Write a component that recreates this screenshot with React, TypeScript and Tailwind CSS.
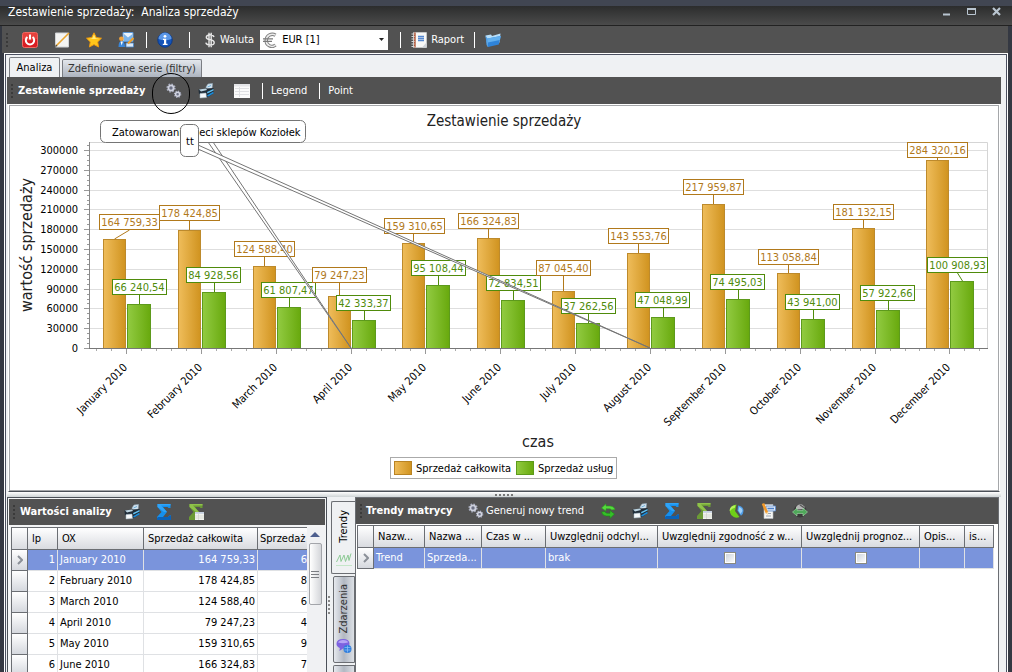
import type { ReactNode } from "react";

type Point = {
  month: string;
  total: number;
  services: number;
  totalText: string;
  servicesText: string;
  // label box corners on the chart canvas
  totalBox: [number, number];
  servicesBox: [number, number];
};

const points: Point[] = [
  { month: "January 2010", total: 164759, services: 66240, totalText: "164 759,33", servicesText: "66 240,54", totalBox: [99, 214], servicesBox: [112, 279] },
  { month: "February 2010", total: 178424, services: 84928, totalText: "178 424,85", servicesText: "84 928,56", totalBox: [159, 205], servicesBox: [186, 267] },
  { month: "March 2010", total: 124588, services: 61807, totalText: "124 588,40", servicesText: "61 807,47", totalBox: [234, 241], servicesBox: [261, 282] },
  { month: "April 2010", total: 79247, services: 42333, totalText: "79 247,23", servicesText: "42 333,37", totalBox: [312, 267], servicesBox: [336, 295] },
  { month: "May 2010", total: 159310, services: 95108, totalText: "159 310,65", servicesText: "95 108,44", totalBox: [384, 218], servicesBox: [411, 260] },
  { month: "June 2010", total: 166324, services: 72834, totalText: "166 324,83", servicesText: "72 834,51", totalBox: [458, 213], servicesBox: [486, 275] },
  { month: "July 2010", total: 87045, services: 37262, totalText: "87 045,40", servicesText: "37 262,56", totalBox: [536, 260], servicesBox: [561, 298] },
  { month: "August 2010", total: 143553, services: 47048, totalText: "143 553,76", servicesText: "47 048,99", totalBox: [608, 228], servicesBox: [635, 292] },
  { month: "September 2010", total: 217959, services: 74495, totalText: "217 959,87", servicesText: "74 495,03", totalBox: [683, 179], servicesBox: [710, 274] },
  { month: "October 2010", total: 113058, services: 43941, totalText: "113 058,84", servicesText: "43 941,00", totalBox: [758, 249], servicesBox: [785, 294] },
  { month: "November 2010", total: 181132, services: 57922, totalText: "181 132,15", servicesText: "57 922,66", totalBox: [833, 204], servicesBox: [860, 285] },
  { month: "December 2010", total: 284320, services: 100908, totalText: "284 320,16", servicesText: "100 908,93", totalBox: [907, 142], servicesBox: [927, 257] },
];

const STEP = 74.85;
const BASE = 348;
const yOf = (value: number) => Math.round(BASE - (value * 198) / 300000);

/* ---------- icons ---------- */

function Icon({ children }: { children: ReactNode }) {
  return (
    <svg width="16" height="16" viewBox="0 0 16 16" className="shrink-0" aria-hidden="true">
      {children}
    </svg>
  );
}

const PowerIcon = () => (
  <Icon>
    <rect x="0.5" y="0.5" width="15" height="15" rx="2" fill="#d81c22" stroke="#ee6a63" />
    <path d="M1 1h14v6q-7 3-14 0z" fill="#f05a50" opacity=".6" />
    <path d="M5.4 5a4.2 4.2 0 1 0 5.2 0" fill="none" stroke="#fff" strokeWidth="2" />
    <path d="M8 2.6v5" stroke="#fff" strokeWidth="2" />
  </Icon>
);

const NoteIcon = () => (
  <Icon>
    <path d="M1.5 1h13v14h-13z" fill="#f4f4f2" stroke="#cfd2d5" />
    <path d="M2 14 15 1" stroke="#e9a52f" strokeWidth="1.6" />
    <path d="m1 15 2.5-1L2 12.5z" fill="#444" />
  </Icon>
);

const StarIcon = () => (
  <Icon>
    <path d="M8 .8 10.3 5.5 15.5 6.2 11.7 9.9 12.6 15 8 12.6 3.4 15 4.300 9.900.5 6.200 5.700 5.500z" fill="#ffc61a" stroke="#f09a0c" strokeWidth=".9" />
    <path d="M8 2.500 9.600 6.300l3.800.6H3.500L6.400 6.200z" fill="#ffe97a" />
  </Icon>
);

const PlanIcon = () => (
  <Icon>
    <path d="M5 .5h10v9H5z" fill="#eaf3fc" stroke="#5b97d6" />
    <path d="M6 2 10 5.500 14.500 2v7H6z" fill="#7cb4ea" />
    <circle cx="3.400" cy="6.800" r="2.300" fill="#f2a33a" />
    <path d="M.5 15q0-6 3.200-6t3.300 6z" fill="#3a86d8" />
    <path d="m2.500 9.500 1.200 4 1.200-4z" fill="#fff" />
    <path d="M8 11h7.500v4H8z" fill="#dce9f7" stroke="#4a86c8" strokeWidth=".8" />
    <path d="m10 11.500 5.500-5.500" stroke="#f0a028" strokeWidth="2" />
  </Icon>
);

const InfoIcon = () => (
  <Icon>
    <circle cx="8" cy="8" r="7.200" fill="#1554b8" stroke="#0b3a8a" />
    <path d="M1.500 7a6.500 6.500 0 0 1 13 0q-6.500 2.500-13 0z" fill="#5a96e6" />
    <circle cx="8" cy="4.300" r="1.400" fill="#fff" />
    <path d="M6 6.700h3.200v5h1.300v1.200H5.800v-1.200H7V7.900H6z" fill="#fff" />
  </Icon>
);

const DollarIcon = () => (
  <Icon>
    <path d="M12 5q-.5-2-4-2-3.700 0-3.700 2.300 0 1.900 3.700 2.500 4.200.6 4.200 2.900Q12.200 13 8 13q-3.700 0-4.200-2.300M7 .8v14.400M9.200.8v14.400" fill="none" stroke="#e8e8e8" strokeWidth="1.400" />
  </Icon>
);

const EuroIcon = () => (
  <Icon>
    <path d="M13.500 3.200A6 6 0 0 0 4.300 8.200 5.600 5.600 0 0 0 13.500 13" fill="none" stroke="#7e7e7e" strokeWidth="3.400" />
    <path d="M13.500 3.200A6 6 0 0 0 4.300 8.200 5.600 5.600 0 0 0 13.500 13" fill="none" stroke="#ececec" strokeWidth="1.500" />
    <path d="M1 6.800h10M1 9.400h9" stroke="#7a7a7a" strokeWidth="1.200" />
  </Icon>
);

const NotebookIcon = () => (
  <Icon>
    <path d="M2.500.5h13v15h-13z" fill="#f8f8f6" stroke="#d9dadb" strokeWidth=".6" />
    <path d="M3 .5h1.700v15H3z" fill="#b2583a" />
    <path d="M.5 2h3M.5 4.500h3M.5 7h3M.5 9.500h3M.5 12h3M.5 14.500h3" stroke="#d8d8d8" />
    <path d="M7 4.500h6M7 6.500h6M7 8.500h6" stroke="#5588d0" strokeWidth="1.300" />
    <path d="m11 15.500 4.500-5v5z" fill="#cfd3d8" />
  </Icon>
);

const FolderIcon = () => (
  <Icon>
    <path d="M.5 3.500 6 2.500l1 1.500 8.500-2.500-1 9-12 4z" fill="#b7def9" />
    <path d="M2.500 6.500 15.800 4 13.800 12.500 3 15z" fill="#2f84da" />
    <path d="M2.500 6.500 15.800 4 15 8 2.800 10.500z" fill="#62b0ef" />
    <path d="M.5 3.500 2.500 6.500 3 15 1.500 13z" fill="#4d9be0" />
  </Icon>
);

const GearsIcon = () => (
  <Icon>
    <circle cx="5" cy="5" r="3.900" fill="none" stroke="#a9adc0" strokeWidth="1.400" strokeDasharray="1.600 1.460" />
    <circle cx="5" cy="5" r="2.600" fill="#6c7084" stroke="#cdd0dd" strokeWidth="1.800" />
    <circle cx="11.600" cy="11.300" r="3.100" fill="none" stroke="#a9adc0" strokeWidth="1.300" strokeDasharray="1.300 1.130" />
    <circle cx="11.600" cy="11.300" r="2" fill="#6c7084" stroke="#d3d6e2" strokeWidth="1.500" />
  </Icon>
);

const PrinterIcon = () => (
  <Icon>
    <path d="m8 4 2-3 4.500-.5L14 6l-5 1z" fill="#d5e4ef" stroke="#93adc0" strokeWidth=".6" />
    <path d="m9.500 4 3.500-1.500" stroke="#4c9fd4" strokeWidth=".8" />
    <path d="M.5 6.500 8 5.500l7.500-.5v5.500L10 14 1 11z" fill="#1f2c38" />
    <path d="M1 6.500 8 5.500l1 1.500-6 1.500z" fill="#bcd3e0" />
    <path d="M9 9 15.500 6v1.500L9.500 10.500z" fill="#64c1f0" />
    <path d="m9.500 13 6-3.500" stroke="#1c8bd8" strokeWidth="1.600" />
    <path d="m2 10.500 6-.5.500 4.500-6.500.5z" fill="#f5f8fa" stroke="#9fb4c2" strokeWidth=".5" />
  </Icon>
);

const GridIcon = () => (
  <Icon>
    <path d="M0 1h16v14H0z" fill="#fbfbfb" />
    <path d="M1 5.500h14M1 8.500h14M1 11.500h14M5.500 4v10" stroke="#dfe0e3" />
    <path d="M0 1h16v2.500H0z" fill="#e4e5e8" />
  </Icon>
);

const SigmaIcon = () => (
  <Icon>
    <path d="M1.500 0H14.500V4h-2l-1-1H7l4 5-4 5h5l1.500-1.500H15V16H1v-3l4.500-5-4-5z" fill="#1590ee" />
    <path d="M1.500 0H14.500V1.500H5L11 8H8L1.500 3z" fill="#2fa4f8" />
    <path d="M1 14 2 13h10l1.500-1.500H15V16H1z" fill="#0b62b8" />
  </Icon>
);

const SigmaTableIcon = () => (
  <Icon>
    <path d="M1.500 0H14.500V4h-2l-1-1H7l4 5-4 5h3v3H1v-3l4.500-5-4-5z" fill="#6b9a35" />
    <path d="M1.500 0H14.500V1.500H5L11 8H8L1.500 3z" fill="#8fc24a" />
    <path d="M7 8h9v8H7z" fill="#f2f3ee" />
    <path d="M7 8h9v1.800H7z" fill="#c5cfdf" />
    <path d="M7 12h9M7 14h9M10.500 10v6" stroke="#cfd3c8" strokeWidth=".7" />
  </Icon>
);

const RefreshIcon = () => (
  <Icon>
    <path d="M1.500 5 6 .8V3h4q4 0 5 3.500L11.500 7Q11 5.800 9.500 5.800H6V8z" fill="#55da3c" stroke="#2a9d20" strokeWidth=".6" />
    <path d="M14.500 11 10 15.500V13H6.500Q2.500 13 1.500 9L5 8.500q.4 1.500 2 1.700h3V7.500z" fill="#35bf28" stroke="#1d8617" strokeWidth=".6" />
  </Icon>
);

const PieIcon = () => (
  <Icon>
    <path d="M8.500 1.500a6.600 6.600 0 1 0 3 12.500L7 8z" fill="#6fcf18" />
    <path d="M7.500 2.200a5.500 5.500 0 0 0-5.800 6q3-3.500 5-3.200z" fill="#b6f05c" />
    <path d="M10 2.500q5.500.8 5.500 5.500 0 3-2.500 4.800L9.500 7.800z" fill="#4c9be6" />
    <path d="M11 4q3.200.8 3.500 4L12.500 11 10.500 7.600z" fill="#a0d0f8" />
  </Icon>
);

const ReportEditIcon = () => (
  <Icon>
    <path d="M4 1.500h9v14H4z" fill="#f6f6f4" stroke="#b9bcc1" strokeWidth=".6" />
    <path d="M6 3h9.500v5H6z" fill="#dbe7f8" stroke="#5f8dca" strokeWidth=".8" />
    <path d="M7.500 5.500h6.500" stroke="#4f80c8" strokeWidth="1.500" />
    <path d="M6 10.500h5M6 13h5" stroke="#9ba4b2" />
    <path d="m3 .5 4 9.500" stroke="#f2992a" strokeWidth="2.600" />
    <path d="m5.700 10 2.500-1-.2 3.200z" fill="#f6dfb4" />
  </Icon>
);

const SwapIcon = () => (
  <Icon>
    <circle cx="8" cy="8" r="6.500" fill="#3a3a3a" />
    <path d="M4 4Q6 .5 10 1.500l3 2.500-1 2-8 .5z" fill="#b5b5b5" />
    <path d="m8 2 4.500 3" stroke="#5a5a5a" strokeWidth="1.500" />
    <path d="M.5 9 5 5v2.300h6V5l4.500 4L11 13v-2.500H5V13z" fill="#4fa85a" stroke="#a9dcae" strokeWidth=".6" />
  </Icon>
);

const TrendIcon = () => (
  <Icon>
    <path d="M.5 11 4 4l1 6.500L8 4l1.500 6.500L12 4l1 5.500 2-7" fill="none" stroke="#8ecb96" />
    <path d="M0 14.500h16" stroke="#c5e6c9" />
  </Icon>
);

const ChatIcon = () => (
  <Icon>
    <path d="M7 1q6.500 0 6.500 4.800T7 10.500L3.500 13l.3-3Q.5 8.800.5 5.800.5 1 7 1z" fill="#7d62e0" />
    <path d="M7 2q5 0 5 2.500-5 1.500-10 0Q3.200 2 7 2z" fill="#b7a5f5" />
    <circle cx="11.500" cy="11" r="4" fill="#2f7ddd" />
    <path d="M8.500 9.500h6M8.500 12h6M11.500 7.500v7" stroke="#8fc2f6" strokeWidth=".7" />
  </Icon>
);

/* ---------- small parts ---------- */

function Grip() {
  return (
    <span className="flex flex-col gap-0.5" aria-hidden="true">
      <i className="size-0.5 bg-[#3a3a3a]" />
      <i className="size-0.5 bg-[#3a3a3a]" />
      <i className="size-0.5 bg-[#3a3a3a]" />
      <i className="size-0.5 bg-[#3a3a3a]" />
    </span>
  );
}

const Separator = () => <span className="h-4 w-px bg-white" aria-hidden="true" />;

function ToolButton({ label, children }: { label: string; children: ReactNode }) {
  return (
    <button type="button" aria-label={label} className="flex size-4 items-center justify-center">
      {children}
    </button>
  );
}

/* ---------- chart ---------- */

function ValueLabel({ box, text, color, anchor }: { box: [number, number]; text: string; color: string; anchor: [number, number] }) {
  const width = text.length > 9 ? 60 : 54;
  const middle = box[0] + width / 2 + 0.5;
  // the leader stays upright unless the label was pushed aside
  const from = Math.abs(middle - anchor[0]) < 3 ? anchor[0] : middle;
  return (
    <g>
      <path d={`M${from} ${box[1] + 16}L${anchor[0]} ${anchor[1]}`} stroke={color} />
      <rect x={box[0] + 0.5} y={box[1] + 0.5} width={width} height="15" fill="#fff" stroke={color} />
      <text x={middle} y={box[1] + 12} textAnchor="middle" fill={color}>
        {text}
      </text>
    </g>
  );
}

function SalesChart() {
  const levels = Array.from({ length: 11 }, (_, i) => i * 30000);
  const minor = Array.from({ length: 42 }, (_, i) => i * 7500).filter((v) => v <= 310000);

  return (
    <svg viewBox="10 106 988 384" className="block h-auto w-full text-[11px]" role="img" aria-label="Zestawienie sprzedaży">
      <defs>
        <linearGradient id="orange">
          <stop offset="0" stopColor="#efbd5b" />
          <stop offset="1" stopColor="#d0931f" />
        </linearGradient>
        <linearGradient id="green">
          <stop offset="0" stopColor="#92cb42" />
          <stop offset="1" stopColor="#68a90d" />
        </linearGradient>
      </defs>

      <text x="504" y="126" textAnchor="middle" className="text-[15px]" fill="#222">
        Zestawienie sprzedaży
      </text>

      <path d="M89 142.500h898.500V348" fill="none" stroke="#d5d5d5" />
      {levels.slice(1).map((v) => (
        <path key={v} d={`M90 ${yOf(v) + 0.5}h897`} stroke="#dedede" />
      ))}
      {levels.map((v) => (
        <g key={v}>
          <path d={`M84 ${yOf(v) + 0.5}h5`} stroke="#999" />
          <text x="78" y={yOf(v) + 4} textAnchor="end">
            {v}
          </text>
        </g>
      ))}
      {minor.map((v) => (
        <path key={v} d={`M87 ${yOf(v) + 0.5}h2`} stroke="#999" />
      ))}
      <path d="M89.500 142v207" stroke="#888" />

      {points.map((p, i) => {
        const x = Math.round(103 + i * STEP);
        const top = yOf(p.total);
        const low = yOf(p.services);
        return (
          <g key={p.month}>
            <rect x={x + 0.5} y={top + 0.5} width="22" height={BASE - top} fill="url(#orange)" stroke="#bd8a2c" />
            <rect x={x + 24.5} y={low + 0.5} width="23" height={BASE - low} fill="url(#green)" stroke="#5d9a1c" />
          </g>
        );
      })}

      <path d="M89 348.500h899" stroke="#777" />
      {points.map((p, i) => {
        const x = Math.round(126 + i * STEP);
        return (
          <g key={p.month}>
            <path d={`M${x + 0.5} 349v5`} stroke="#999" />
            <path d={`M${x - 29.5} 349v2M${x - 14.5} 349v2M${x + 15.5} 349v2M${x + 30.5} 349v2`} stroke="#aaa" />
            <text transform={`translate(${x + 2} 368) rotate(-45)`} textAnchor="end">
              {p.month}
            </text>
          </g>
        );
      })}

      {points.map((p, i) => {
        const x = Math.round(103 + i * STEP);
        return (
          <g key={p.month}>
            <ValueLabel box={p.totalBox} text={p.totalText} color="#b1791b" anchor={[x + 11.5, yOf(p.total)]} />
            <ValueLabel box={p.servicesBox} text={p.servicesText} color="#4f8b0b" anchor={[x + 36.5, yOf(p.services)]} />
          </g>
        );
      })}

      <g fill="#fff" stroke="#757575">
        <path d="M208 142 351 348 213 142" />
        <rect x="100.500" y="120.500" width="205" height="22" rx="5" />
        <path d="M198 145 650 348 198 149" />
      </g>
      <text x="112" y="136">
        Zatowarowanie sieci sklepów Koziołek
      </text>
      <rect x="180.500" y="124.500" width="18" height="32" rx="5" fill="#fff" stroke="#757575" />
      <text x="190" y="145" textAnchor="middle">
        tt
      </text>

      <text transform="translate(32 245) rotate(-90)" textAnchor="middle" className="text-base" fill="#222">
        wartość sprzedaży
      </text>
      <text x="538" y="447" textAnchor="middle" className="text-base" fill="#222">
        czas
      </text>

      <rect x="390.500" y="457.500" width="226" height="21" fill="#fff" stroke="#aaa" />
      <rect x="394.500" y="461.500" width="17" height="13" fill="url(#orange)" stroke="#b98323" />
      <text x="416" y="472">
        Sprzedaż całkowita
      </text>
      <rect x="516.500" y="461.500" width="17" height="13" fill="url(#green)" stroke="#5d9a1c" />
      <text x="538" y="472">
        Sprzedaż usług
      </text>
    </svg>
  );
}

/* ---------- bottom panels ---------- */

const headCell =
  "h-[22px] overflow-hidden border-r border-b border-[#6b6e73] bg-linear-to-b from-white to-[#d9dbe0] px-1 text-left font-normal whitespace-nowrap";
const markCell = "border-r border-b border-[#6b6e73] bg-linear-to-b from-white to-[#d5d8de] p-0 text-center text-[#8b8f96]";

function Marker() {
  return (
    <svg width="6" height="10" viewBox="0 0 6 10" className="mx-auto" aria-hidden="true">
      <path d="m1 1 4 4-4 4" fill="none" stroke="#8b9098" strokeWidth="2" />
    </svg>
  );
}

function ValuesPanel() {
  const clipped = ["6", "8", "6", "4", "9", "7"];
  return (
    <section className="flex w-[320px] shrink-0 flex-col border border-b-0 border-[#4b5058] bg-[#f3f4f5] px-px pt-px">
      <div className="flex h-[26px] shrink-0 items-center gap-1 bg-[#525252] pl-1 text-white">
        <Grip />
        <h2 className="w-[101px] pl-px font-bold whitespace-nowrap">Wartości analizy</h2>
        <div className="flex gap-4">
          <ToolButton label="Drukuj wartości"><PrinterIcon /></ToolButton>
          <ToolButton label="Suma"><SigmaIcon /></ToolButton>
          <ToolButton label="Suma tabeli"><SigmaTableIcon /></ToolButton>
        </div>
      </div>
      <div className="mt-0.5 ml-0.5 flex min-h-0 flex-1 overflow-hidden border-l border-[#6b6e73] bg-white">
        <div className="min-w-0 flex-1 overflow-hidden border-t border-[#6b6e73]">
          <table className="w-full table-fixed border-separate border-spacing-0">
            <colgroup>
              <col className="w-4" />
              <col className="w-[30px]" />
              <col className="w-[86px]" />
              <col className="w-[114px]" />
              <col />
            </colgroup>
            <thead>
              <tr>
                <th className={headCell} />
                <th className={headCell}>lp</th>
                <th className={headCell}>OX</th>
                <th className={headCell}>Sprzedaż całkowita</th>
                <th className="h-[22px] border-b border-[#6b6e73] bg-linear-to-b from-white to-[#d9dbe0] pl-0.5 text-left font-normal whitespace-nowrap">
                  Sprzedaż
                </th>
              </tr>
            </thead>
            <tbody>
              {clipped.map((digit, i) => (
                <tr key={i} className={i === 0 ? "h-[21px] bg-[#7a94dc] text-white" : "h-[21px] bg-white"}>
                  <td className={markCell}>{i === 0 && <Marker />}</td>
                  <td className="border-r border-b border-[#dfe1e4] px-0.5 text-right">{i + 1}</td>
                  <td className="border-r border-b border-[#dfe1e4] px-0.5 whitespace-nowrap">{points[i].month}</td>
                  <td className="border-r border-b border-[#dfe1e4] px-0.5 text-right">{points[i].totalText}</td>
                  <td className="border-b border-[#dfe1e4] text-right">{digit}</td>
                </tr>
              ))}
            </tbody>
          </table>
        </div>
        <div className="flex w-[18px] flex-col items-center bg-[#f0f1f3] pr-0.5" aria-hidden="true">
          <svg width="10" height="6" viewBox="0 0 10 6" className="my-1">
            <path d="M0 6 5 1l5 5z" fill="#4d5f8e" />
          </svg>
          <div className="mt-0.5 flex h-[62px] w-[13px] flex-col items-center justify-center gap-0.5 rounded-xs border border-[#a3a5aa] bg-linear-to-r from-white to-[#d4d6da]">
            <i className="h-px w-2 bg-[#7a7d82]" />
            <i className="h-px w-2 bg-[#7a7d82]" />
            <i className="h-px w-2 bg-[#7a7d82]" />
          </div>
        </div>
      </div>
    </section>
  );
}

function SideTabs() {
  return (
    <div className="mt-1 flex w-6 shrink-0 flex-col gap-0.5">
      <button type="button" className="flex h-[73px] w-6 flex-col items-center justify-end gap-2 rounded-l-xs border border-r-0 border-[#6b6e73] bg-[#eff1f3] pb-1.5">
        <span className="rotate-180 [writing-mode:vertical-rl]">Trendy</span>
        <TrendIcon />
      </button>
      <button type="button" className="ml-0.5 flex h-[87px] flex-col items-center justify-end gap-1 rounded-l-xs border border-[#6b6e73] bg-linear-to-r from-[#e6e9ee] via-[#b2b8c2] to-[#dde1e6] pb-2">
        <span className="rotate-180 text-[#333] [writing-mode:vertical-rl]">Zdarzenia</span>
        <ChatIcon />
      </button>
      <div className="ml-0.5 flex-1 rounded-tl-xs border border-b-0 border-[#6b6e73] bg-linear-to-r from-[#e6e9ee] via-[#b2b8c2] to-[#dde1e6]" />
    </div>
  );
}

function TrendsPanel() {
  const heads = ["Nazw...", "Nazwa ...", "Czas w ...", "Uwzględnij odchyl...", "Uwzględnij zgodność z w...", "Uwzględnij prognoz...", "Opis...", "is..."];
  const cell = "border-r border-b border-[#dfe1e4] px-0.5 whitespace-nowrap";
  return (
    <section className="mr-0.5 flex min-w-0 flex-1 flex-col border-x border-t border-[#6b6e73] bg-white">
      <div className="flex h-[26px] shrink-0 items-center gap-1 bg-[#525252] pl-1 text-white">
        <Grip />
        <h2 className="w-[98px] font-bold whitespace-nowrap">Trendy matrycy</h2>
        <button type="button" className="flex w-[128px] items-center gap-0.5 whitespace-nowrap">
          <GearsIcon />
          Generuj nowy trend
        </button>
        <div className="flex gap-4">
          <ToolButton label="Odśwież"><RefreshIcon /></ToolButton>
          <ToolButton label="Drukuj trendy"><PrinterIcon /></ToolButton>
          <ToolButton label="Suma trendów"><SigmaIcon /></ToolButton>
          <ToolButton label="Suma tabeli trendów"><SigmaTableIcon /></ToolButton>
          <ToolButton label="Wykres"><PieIcon /></ToolButton>
          <ToolButton label="Edytuj raport"><ReportEditIcon /></ToolButton>
          <ToolButton label="Zamień"><SwapIcon /></ToolButton>
        </div>
      </div>
      <div className="mt-px mr-1 ml-px border-t border-l border-[#6b6e73]">
        <table className="w-full table-fixed border-separate border-spacing-0">
          <colgroup>
            <col className="w-4" />
            <col className="w-[51px]" />
            <col className="w-[57px]" />
            <col className="w-16" />
            <col className="w-28" />
            <col className="w-36" />
            <col className="w-[118px]" />
            <col className="w-[45px]" />
            <col />
          </colgroup>
          <thead>
            <tr>
              <th className={headCell} />
              {heads.map((head) => (
                <th key={head} className={headCell}>{head}</th>
              ))}
            </tr>
          </thead>
          <tbody>
            <tr className="h-[21px] bg-[#7a94dc] text-white">
              <td className={markCell}><Marker /></td>
              <td className={cell}>Trend</td>
              <td className={cell}>Sprzeda...</td>
              <td className={cell} />
              <td className={cell}>brak</td>
              <td className={cell}><GridCheck label="Uwzględnij zgodność" /></td>
              <td className={cell}><GridCheck label="Uwzględnij prognozę" /></td>
              <td className={cell} />
              <td className={cell} />
            </tr>
          </tbody>
        </table>
      </div>
    </section>
  );
}

function GridCheck({ label }: { label: string }) {
  return (
    <input
      type="checkbox"
      aria-label={label}
      className="mx-auto block size-3 appearance-none border border-[#8a8a80] bg-linear-to-br from-[#c9d0d8] to-white outline outline-offset-[-2px] outline-white"
    />
  );
}

/* ---------- window ---------- */

export default function App() {
  return (
    <div className="flex h-screen flex-col overflow-hidden bg-[#343842] font-['DejaVu_Sans_Condensed','Noto_Sans',sans-serif] text-[11px] leading-[14px] text-black">
      <header className="flex h-[26px] shrink-0 items-center justify-between border-t-6 border-b border-t-[#414652] border-b-[#222] bg-linear-to-b from-[#2c2d2d] to-[#4b4b4b] pr-2.5 pl-2 text-[12px] text-white">
        <h1 className="pb-2 whitespace-pre">Zestawienie sprzedaży:  Analiza sprzedaży</h1>
        <div className="flex gap-[15px] pb-2 text-[#b9c5d0]">
          <button type="button" aria-label="Minimalizuj">
            <svg width="10" height="10" viewBox="0 0 10 10"><path d="M1 7.500h7" stroke="currentColor" strokeWidth="2" /></svg>
          </button>
          <button type="button" aria-label="Maksymalizuj">
            <svg width="10" height="10" viewBox="0 0 10 10"><path d="M.5 2.500h8v5h-8z" fill="none" stroke="currentColor" /><path d="M0 2h9" stroke="currentColor" strokeWidth="2" /></svg>
          </button>
          <button type="button" aria-label="Zamknij">
            <svg width="10" height="10" viewBox="0 0 10 10"><path d="m1 1 7 7M8 1 1 8" stroke="currentColor" strokeWidth="2.200" /></svg>
          </button>
        </div>
      </header>

      <div className="mr-1 ml-0.5 flex h-[27px] shrink-0 items-center bg-[#525252] pl-1 text-white">
        <Grip />
        <div className="flex items-center gap-4 pl-3.5">
          <ToolButton label="Wyłącz"><PowerIcon /></ToolButton>
          <ToolButton label="Notatka"><NoteIcon /></ToolButton>
          <ToolButton label="Ulubione"><StarIcon /></ToolButton>
          <ToolButton label="Plan"><PlanIcon /></ToolButton>
        </div>
        <div className="flex items-center gap-2.5 pl-3">
          <Separator />
          <ToolButton label="Informacje"><InfoIcon /></ToolButton>
        </div>
        <div className="flex items-center gap-3 pl-4">
          <Separator />
          <label htmlFor="currency" className="flex items-center gap-0.5">
            <DollarIcon />
            Waluta
          </label>
        </div>
        <div className="relative ml-1.5 flex h-[20px] w-[128px] items-center bg-white pl-0.5 text-black">
          <EuroIcon />
          <select id="currency" className="h-full flex-1 appearance-none bg-transparent pl-1 outline-none">
            <option>EUR [1]</option>
          </select>
          <svg width="5" height="3" viewBox="0 0 5 3" className="pointer-events-none absolute top-2 right-1" aria-hidden="true">
            <path d="M0 0h5L2.500 3z" fill="#222" />
          </svg>
        </div>
        <div className="flex items-center gap-2.5 pl-3">
          <Separator />
          <button type="button" className="flex items-center gap-1">
            <NotebookIcon />
            Raport
          </button>
          <Separator />
          <ToolButton label="Otwórz"><FolderIcon /></ToolButton>
        </div>
      </div>

      <div className="mx-1 flex min-h-0 flex-1 flex-col border-x border-t border-white bg-[#eff1f3]">
        <div className="flex min-h-0 flex-1 flex-col border-x border-t border-[#4b5060] px-px">
          <nav className="flex h-[22px] shrink-0 items-end gap-0.5 pl-0.5">
            <button type="button" className="h-5 w-[51px] rounded-t-xs border border-b-0 border-[#7a7d82] bg-[#eff1f3]">
              Analiza
            </button>
            <button type="button" className="h-[18px] w-[140px] rounded-t-xs border border-b-0 border-[#7a7d82] bg-linear-to-b from-[#e3e7ec] to-[#adb4bf] text-[#333]">
              Zdefiniowane serie (filtry)
            </button>
          </nav>

          <div className="mr-1 flex min-h-0 flex-1 flex-col">
            <div className="relative flex h-[27px] shrink-0 items-center bg-[#525252] pl-1 text-white">
              <Grip />
              <h2 className="w-[153px] pl-[5px] font-bold whitespace-nowrap">Zestawienie sprzedaży</h2>
              <div className="flex gap-4 pr-3">
                <ToolButton label="Ustawienia"><GearsIcon /></ToolButton>
                <ToolButton label="Drukuj wykres"><PrinterIcon /></ToolButton>
                <span className="pl-1"><ToolButton label="Tabela"><GridIcon /></ToolButton></span>
              </div>
              <Separator />
              <button type="button" className="px-2">Legend</button>
              <span className="w-1" />
              <Separator />
              <button type="button" className="px-2">Point</button>
              <span className="pointer-events-none absolute -top-1 left-[145px] z-10 h-[41px] w-[38px] rounded-full border border-black" />
            </div>

            <div className="mr-px ml-px shrink-0 border border-white border-b-[#4b5058] bg-white">
              <div className="border border-[#a5a7aa]">
                <SalesChart />
              </div>
            </div>

            <div className="flex h-[5px] shrink-0 items-center justify-center gap-0.5 bg-linear-to-b from-white to-[#cfd4d6]" aria-hidden="true">
              <i className="size-0.5 bg-[#777]" />
              <i className="size-0.5 bg-[#777]" />
              <i className="size-0.5 bg-[#777]" />
              <i className="size-0.5 bg-[#777]" />
              <i className="size-0.5 bg-[#777]" />
            </div>

            <main className="flex min-h-0 flex-1">
              <ValuesPanel />
              <div className="flex w-1 flex-col items-center justify-center gap-0.5 pt-10" aria-hidden="true">
                <i className="size-0.5 bg-[#888]" />
                <i className="size-0.5 bg-[#888]" />
                <i className="size-0.5 bg-[#888]" />
                <i className="size-0.5 bg-[#888]" />
                <i className="size-0.5 bg-[#888]" />
              </div>
              <SideTabs />
              <TrendsPanel />
            </main>
          </div>
        </div>
      </div>
    </div>
  );
}
